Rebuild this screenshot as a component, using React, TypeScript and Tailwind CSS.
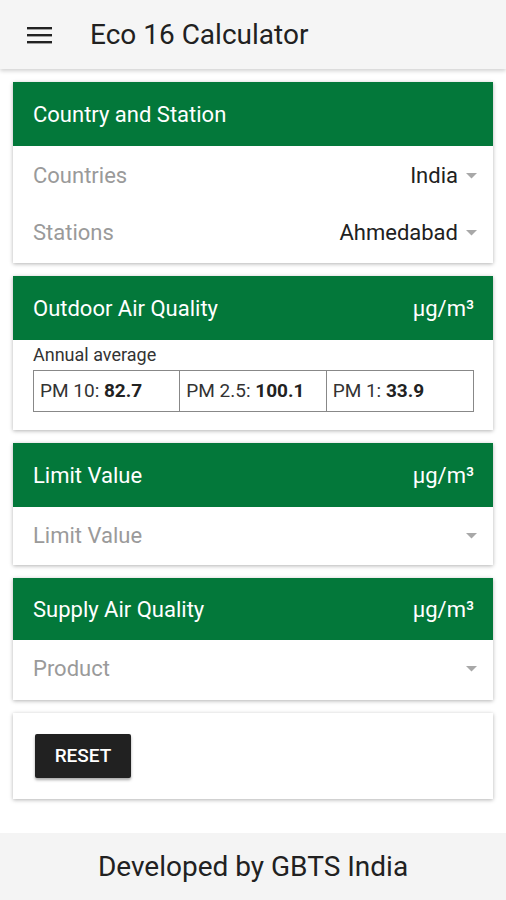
import React from "react";

const GREEN = "bg-[#03783a]";

function Caret() {
  return (
    <svg width="11" height="6" viewBox="0 0 11 6" className="ml-[8px] shrink-0">
      <path d="M0 0 L11 0 L5.5 5.5 Z" fill="#a8a8a8" />
    </svg>
  );
}

function CardHeader({ title, unit, tall = true }: { title: string; unit?: boolean; tall?: boolean }) {
  return (
    <div
      className={`${GREEN} ${tall ? "h-16" : "h-[62px]"} flex items-center justify-between pl-5 pr-[19px] text-white text-[22px]`}
    >
      <span>{title}</span>
      {unit && <span>µg/m³</span>}
    </div>
  );
}

function SelectRow({ label, value }: { label: string; value?: string }) {
  return (
    <div className="h-[57px] flex items-center justify-between pl-5 pr-[16px] text-[22px]">
      <span className="text-[#9a9a9a]">{label}</span>
      <div className="flex items-center text-[#212121]">
        {value && <span>{value}</span>}
        <Caret />
      </div>
    </div>
  );
}

export default function App() {
  const pm = [
    { label: "PM 10:", value: "82.7" },
    { label: "PM 2.5:", value: "100.1" },
    { label: "PM 1:", value: "33.9" },
  ];

  return (
    <div className="w-[506px] h-[900px] bg-white flex flex-col font-['Roboto',sans-serif] overflow-hidden">
      <header className="h-[69px] bg-[#f5f5f5] flex items-center shadow-[0_2px_4px_rgba(0,0,0,0.18)] relative z-10 shrink-0">
        <svg width="26" height="20" viewBox="0 0 26 20" className="ml-[27px]">
          <rect x="0" y="2" width="25" height="2.4" fill="#222" />
          <rect x="0" y="9" width="25" height="2.4" fill="#222" />
          <rect x="0" y="16" width="25" height="2.4" fill="#222" />
        </svg>
        <h1 className="ml-[37px] text-[28px] text-[#212121]">Eco 16 Calculator</h1>
      </header>

      <main className="flex-1 flex flex-col gap-[13px] px-[13px] pt-[13px]">
        <section className="bg-white shadow-[0_1px_4px_rgba(0,0,0,0.3)]">
          <CardHeader title="Country and Station" />
          <div className="pt-[1px] pb-[2px]">
            <SelectRow label="Countries" value="India" />
            <SelectRow label="Stations" value="Ahmedabad" />
          </div>
        </section>

        <section className="bg-white shadow-[0_1px_4px_rgba(0,0,0,0.3)]">
          <CardHeader title="Outdoor Air Quality" unit />
          <div className="pl-5 pr-[19px] pt-[3px] pb-[18px]">
            <div className="text-[18px] text-[#333] leading-[24px]">Annual average</div>
            <div className="mt-[3px] grid grid-cols-3 h-[42px] border border-[#888] text-[19px] text-[#333]">
              {pm.map((p, i) => (
                <div
                  key={p.label}
                  className={`flex items-center px-[6px] ${i < 2 ? "border-r border-[#888]" : ""}`}
                >
                  {p.label}&nbsp;<b className="text-[#222]">{p.value}</b>
                </div>
              ))}
            </div>
          </div>
        </section>

        <section className="bg-white shadow-[0_1px_4px_rgba(0,0,0,0.3)]">
          <CardHeader title="Limit Value" unit />
          <div className="pb-[1px]">
            <SelectRow label="Limit Value" />
          </div>
        </section>

        <section className="bg-white shadow-[0_1px_4px_rgba(0,0,0,0.3)]">
          <CardHeader title="Supply Air Quality" unit tall={false} />
          <div className="pb-[3px]">
            <SelectRow label="Product" />
          </div>
        </section>

        <section className="bg-white shadow-[0_1px_4px_rgba(0,0,0,0.3)] h-[86px] px-[22px] pt-[21px]">
          <button className="h-[44px] w-[96px] bg-[#212121] text-white text-[19px] font-medium rounded-[2px] shadow-[0_2px_3px_rgba(0,0,0,0.35)]">
            RESET
          </button>
        </section>
      </main>

      <footer className="h-[67px] bg-[#f4f4f4] flex items-center justify-center text-[28px] text-[#212121] shrink-0">
        Developed by GBTS India
      </footer>
    </div>
  );
}
